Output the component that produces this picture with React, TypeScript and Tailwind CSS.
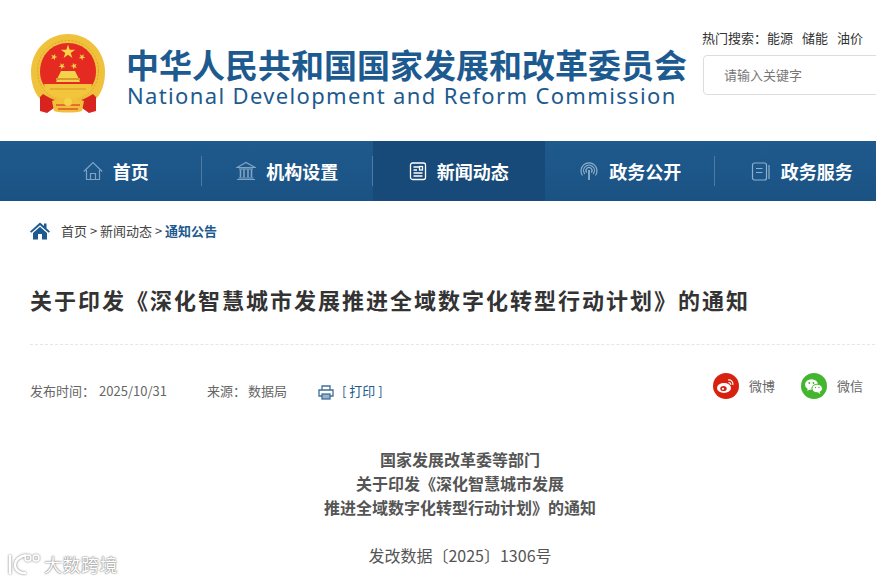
const star = (cx: number, cy: number, r: number, rot = 0) => {
  const pts: string[] = [];
  for (let i = 0; i < 10; i++) {
    const a = (-90 + rot + i * 36) * (Math.PI / 180);
    const rad = i % 2 === 0 ? r : r * 0.382;
    pts.push(`${(cx + rad * Math.cos(a)).toFixed(2)},${(cy + rad * Math.sin(a)).toFixed(2)}`);
  }
  return pts.join(" ");
};

function Emblem() {
  return (
    <svg width="76" height="80" viewBox="0 0 76 80" className="shrink-0">
      <path d="M11 66C4 59 1 49 1 38C1 17 17 0 38 0C59 0 75 17 75 38C75 49 72 59 65 66Z" fill="#f0c23c" />
      <circle cx="38" cy="37" r="30.5" fill="none" stroke="#dca52a" strokeWidth="1" strokeDasharray="2 1.5" />
      <path d="M10 38C10 21 22 9 38 9C54 9 66 21 66 38C66 44 64 49 61 53H15C12 49 10 44 10 38Z" fill="#e52a22" />
      <polygon points={star(38, 18, 7.5)} fill="#f7d348" />
      <polygon points={star(24, 23, 3.5, 20)} fill="#f7d348" />
      <polygon points={star(32, 32, 3.5, 40)} fill="#f7d348" />
      <polygon points={star(44, 32, 3.5, -20)} fill="#f7d348" />
      <polygon points={star(52, 23, 3.5, -40)} fill="#f7d348" />
      <path d="M28 43L31 37H45L48 43L50 48H26Z" fill="#f4d24c" />
      <path d="M26 44H50V46H26Z" fill="#d99c26" />
      <path d="M14 50H62L60 58C52 62 45 64 38 64C31 64 24 62 16 58Z" fill="#f3c53d" />
      <path d="M20 55H56" stroke="#d49724" strokeWidth="1.2" />
      <path d="M10 63L13 60C22 66 30 68 38 68C46 68 54 66 63 60L66 63V77L59 79L52 74H24L17 79L10 77Z" fill="#d8231f" />
      <path d="M22 67C28 64 48 64 54 67L52 77C46 79 30 79 24 77Z" fill="#f2bf3a" />
      <path d="M26 71H50M28 75H48" stroke="#d8231f" strokeWidth="1" />
      <circle cx="38" cy="68" r="4" fill="#f6d24a" />
    </svg>
  );
}

const IconHome = () => (
  <svg width="20" height="20" viewBox="0 0 20 20" fill="none" stroke="#7fa3c4" strokeWidth="1.2">
    <path d="M0.8 10.5L10 1.5L19.2 10.5" />
    <path d="M3.5 9V18.5H16.5V9" />
    <path d="M7.5 18.5V12.5H12.5V18.5" />
  </svg>
);
const IconBank = () => (
  <svg width="20" height="20" viewBox="0 0 20 20" fill="none" stroke="#7fa3c4" strokeWidth="1.2">
    <path d="M1 6.5L10 1.5L19 6.5Z" />
    <path d="M3 8H17" />
    <path d="M4.5 8.5V16.5M8 8.5V16.5M12 8.5V16.5M15.5 8.5V16.5" strokeWidth="1.6" />
    <path d="M1 18.5H19M2.5 17H17.5" />
  </svg>
);
const IconNews = () => (
  <svg width="18" height="20" viewBox="0 0 18 20" fill="none" stroke="#ffffff" strokeWidth="1.3">
    <rect x="1.5" y="2" width="15" height="16.5" rx="2" />
    <path d="M4.5 6H10M4.5 9H8M4.5 12H13.5M4.5 15H13.5" />
    <rect x="10.5" y="5.5" width="3" height="3.5" />
  </svg>
);
const IconSignal = () => (
  <svg width="20" height="20" viewBox="0 0 20 20" fill="none" stroke="#8fb0cc" strokeWidth="1.2">
    <path d="M3.5 14.5A8 8 0 1 1 16.5 14.5" />
    <path d="M5.8 13A5.4 5.4 0 1 1 14.2 13" />
    <path d="M7.8 11.5A3 3 0 1 1 12.2 11.5" />
    <path d="M10 9V19" strokeWidth="1.8" />
  </svg>
);
const IconBook = () => (
  <svg width="20" height="20" viewBox="0 0 20 20" fill="none" stroke="#8fb0cc" strokeWidth="1.2">
    <rect x="1.5" y="2" width="14" height="17" rx="2" />
    <path d="M5 7.5H11.5M5 11.5H11.5" />
    <path d="M18 4V18" />
  </svg>
);

const nav = [
  { t: "首页", i: <IconHome /> },
  { t: "机构设置", i: <IconBank /> },
  { t: "新闻动态", i: <IconNews />, active: true },
  { t: "政务公开", i: <IconSignal />, noBorder: true },
  { t: "政务服务", i: <IconBook /> },
];

export default function App() {
  return (
    <div className="relative w-[876px] h-[582px] overflow-hidden bg-white font-['Noto_Sans_CJK_SC','Noto_Sans',sans-serif]">
      <header className="flex h-[141px] pl-[30px]">
        <div className="flex items-start pt-[34px] gap-[20px] w-[672px] shrink-0">
          <Emblem />
          <div className="flex flex-col pt-[11px]">
            <div className="text-[33px] leading-[38px] font-bold text-[#1d5a8f] whitespace-nowrap">中华人民共和国国家发展和改革委员会</div>
            <div className="text-[22px] leading-[24px] text-[#1d5a8f] tracking-[1.35px] whitespace-nowrap font-['Noto_Sans',sans-serif] ml-[1px]">National Development and Reform Commission</div>
          </div>
        </div>
        <div className="pt-[28px] shrink-0">
          <div className="text-[13px] leading-[20px] text-[#333] whitespace-nowrap flex gap-[9px]">
            <span>热门搜索：能源</span><span>储能</span><span>油价</span>
          </div>
          <div className="mt-[7px] ml-[1px] w-[240px] h-[40px] border border-[#dddddd] rounded-[4px] pl-[20px] flex items-center text-[13px] text-[#777]">请输入关键字</div>
        </div>
      </header>

      <nav className="flex h-[60px] pl-[30px] bg-gradient-to-b from-[#1f5a8d] to-[#1b5284]">
        {nav.map((n) => (
          <div key={n.t} className={`relative w-[171.5px] shrink-0 flex items-center justify-center gap-[10px] ${n.active ? "bg-[#174a78]" : ""}`}>
            {n.i}
            <span className="text-[18px] font-bold text-white whitespace-nowrap">{n.t}</span>
            {!n.active && !n.noBorder && n.t !== "政务服务" && n.t !== "机构设置" && (
              <span className="absolute right-0 top-[15px] h-[30px] w-px bg-[#4f7ba3]" />
            )}
            {n.t === "机构设置" && <span className="absolute right-0 top-[15px] h-[30px] w-px bg-[#4f7ba3]" />}
            {n.noBorder && <span className="absolute right-[1px] top-[15px] h-[30px] w-px bg-[#4f7ba3]" />}
          </div>
        ))}
      </nav>

      <div className="flex items-center h-[60px] pl-[30px] text-[13px] text-[#444] whitespace-nowrap">
        <svg width="20" height="18" viewBox="0 0 20 18" className="mr-[11px]" fill="#1d5a8f">
          <path d="M10 0.5L0 9.5L1.3 10.8L10 3.2L18.7 10.8L20 9.5L16.5 6.3V1.5H14V4.1Z" />
          <path d="M10 4.8L3 11V17.5H8V12H12V17.5H17V11Z" />
        </svg>
        <span>首页 &gt; 新闻动态 &gt;&nbsp;</span>
        <span className="font-bold text-[#1d5a8f]">通知公告</span>
      </div>

      <main className="ml-[30px] w-[860px]">
        <h1 className="mt-[20px] text-[22px] leading-[36px] font-bold text-[#333] whitespace-nowrap tracking-[2px]">关于印发《深化智慧城市发展推进全域数字化转型行动计划》的通知</h1>
        <div className="mt-[27px] border-t border-dashed border-[#e6e6e6]" />

        <div className="relative flex items-center h-[30px] mt-[31px] text-[13px] text-[#666] whitespace-nowrap">
          <span>发布时间：</span>
          <span className="ml-[4px]">2025/10/31</span>
          <span className="ml-[40px]">来源：</span>
          <span className="ml-[2px]">数据局</span>
          <svg width="16" height="15" viewBox="0 0 16 15" className="ml-[31px] mt-[2px]" fill="none" stroke="#3f6f99" strokeWidth="1.3">
            <path d="M4 5V1H12V5" />
            <path d="M4 11H1V5H15V11H12" />
            <rect x="4" y="9" width="8" height="5" fill="#9bb3c9" />
          </svg>
          <span className="ml-[8px] text-[#1d5a8f]">[ 打印 ]</span>
          <div className="absolute left-[683px] -top-[3px] flex items-center">
            <span className="w-[26px] h-[26px] rounded-full bg-[#d6220f] flex items-center justify-center">
              <svg width="20" height="18" viewBox="0 0 20 18" fill="none">
                <ellipse cx="8" cy="11" rx="7" ry="5" fill="#ffffff" />
                <ellipse cx="7.5" cy="11.5" rx="3.2" ry="2.6" fill="#d6220f" />
                <circle cx="7" cy="11.8" r="1.1" fill="#ffffff" />
                <path d="M12 3C15 2.5 17.5 5 16.8 8M12.5 5.6C14 5.3 15 6.4 14.7 7.8" stroke="#ffffff" strokeWidth="1.2" />
              </svg>
            </span>
            <span className="ml-[10px]">微博</span>
            <span className="ml-[26px] w-[26px] h-[26px] rounded-full bg-[#44b52f] flex items-center justify-center">
              <svg width="20" height="17" viewBox="0 0 20 17" fill="#ffffff">
                <ellipse cx="7.5" cy="6.5" rx="6.5" ry="5.3" />
                <path d="M4 10L3.2 13L6.5 11Z" />
                <ellipse cx="13.2" cy="10.5" rx="5.3" ry="4.3" stroke="#44b52f" strokeWidth="1" />
                <path d="M15.5 14L16.5 16L13.5 14.5Z" />
                <circle cx="5.3" cy="5" r="0.9" fill="#44b52f" />
                <circle cx="9.5" cy="5" r="0.9" fill="#44b52f" />
                <circle cx="11.5" cy="9.5" r="0.7" fill="#44b52f" />
                <circle cx="15" cy="9.5" r="0.7" fill="#44b52f" />
              </svg>
            </span>
            <span className="ml-[10px]">微信</span>
          </div>
        </div>

        <div className="mt-[41px] text-center text-[16px] leading-[24px] text-[#555] whitespace-nowrap">
          <div className="font-bold">国家发展改革委等部门</div>
          <div className="font-bold">关于印发《深化智慧城市发展</div>
          <div className="font-bold">推进全域数字化转型行动计划》的通知</div>
          <div className="mt-[24px]">发改数据〔2025〕1306号</div>
        </div>
      </main>

      <div className="absolute left-[8px] top-[552px] flex items-center text-white [text-shadow:0_0_2px_#777,0_0_1px_#777]">
        <svg width="34" height="24" viewBox="0 0 34 24" fill="none" stroke="#ffffff" strokeWidth="2.4" className="[filter:drop-shadow(0_0_1px_#777)]">
          <path d="M2 3V22" />
          <path d="M18 3C10 5 7 9 7 13C7 18 12 22 18 21" />
          <circle cx="20" cy="6" r="3" strokeWidth="1.5" />
          <circle cx="28" cy="6" r="3" strokeWidth="1.5" />
        </svg>
        <span className="ml-[2px] text-[18px] leading-[24px] tracking-[0.5px]">大数跨境</span>
      </div>
    </div>
  );
}
